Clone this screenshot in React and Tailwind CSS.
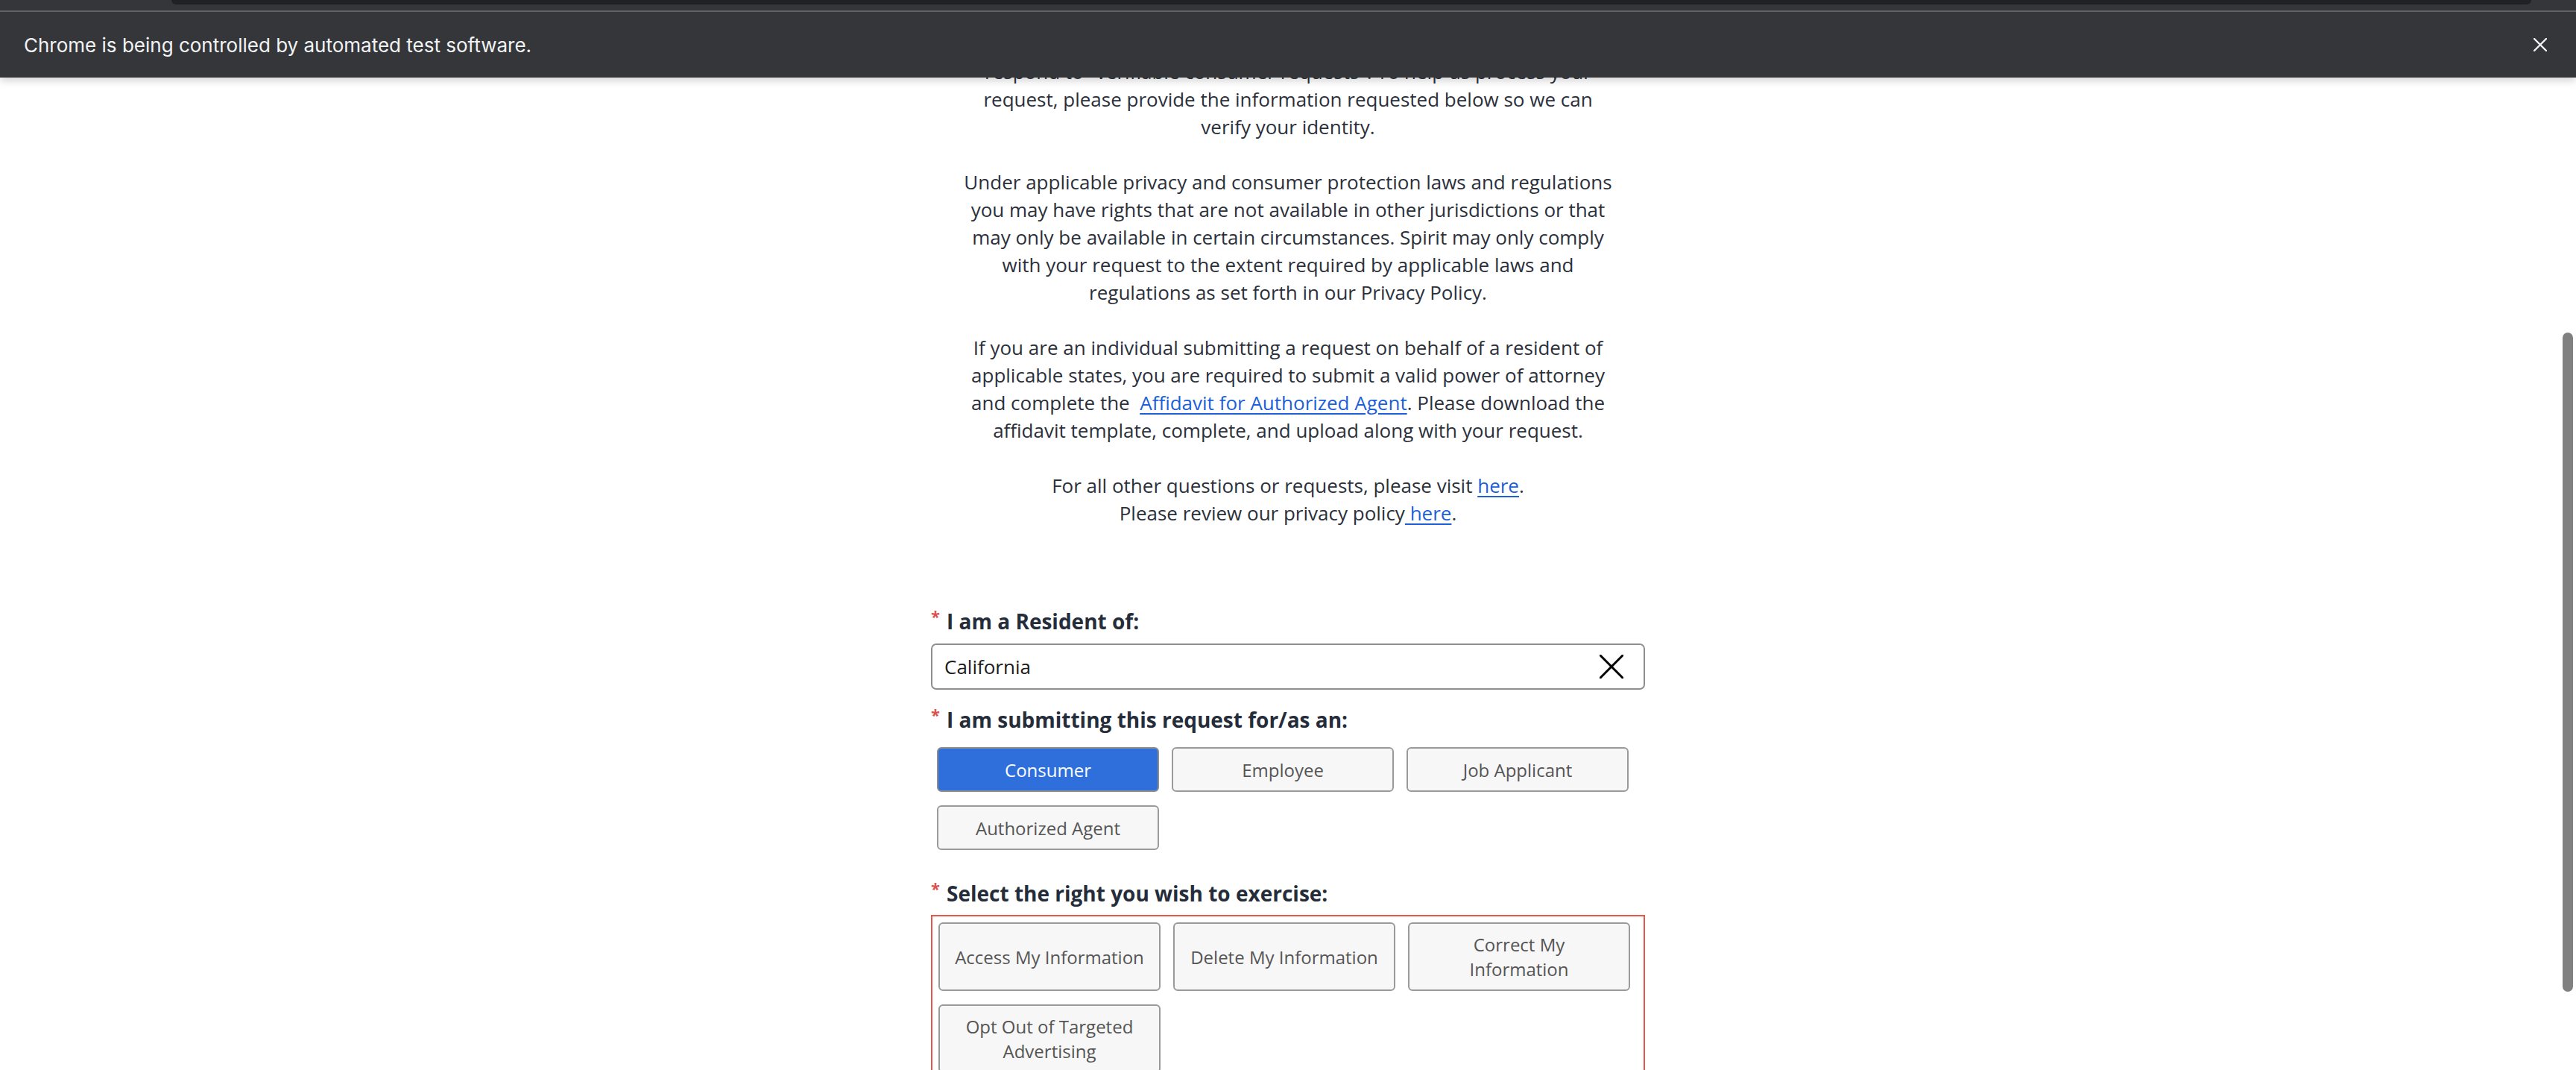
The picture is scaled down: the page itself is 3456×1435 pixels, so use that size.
const Asterisk = () => (
  <span className="relative -top-[9px] mr-[9px] text-[22px] leading-none text-[#d9534f]">*</span>
);

const Label = ({ children, className = "" }) => (
  <div className={`flex items-baseline text-[28px] leading-[37px] font-bold text-[#262d3a] ${className}`}>
    <Asterisk />
    <span>{children}</span>
  </div>
);

const Choice = ({ children, active }) => (
  <button
    className={
      active
        ? "w-[298px] min-h-[60px] px-[16px] py-[11px] border-2 border-[#8d8d8d] rounded-[6px] bg-[#2f6fdb] text-white text-[24px] leading-[33px]"
        : "w-[298px] min-h-[60px] px-[16px] py-[11px] border-2 border-[#9a9a9a] rounded-[6px] bg-[#f7f7f7] text-[#555] text-[24px] leading-[33px]"
    }
  >
    {children}
  </button>
);

const A = ({ children }) => (
  <a href="#" className="text-[#1d5fd6] underline underline-offset-[4px]">
    {children}
  </a>
);

const Cross = ({ size, stroke, className }) => (
  <svg width={size} height={size} viewBox={`0 0 ${size} ${size}`} className={className}>
    <path
      d={`M1 1 L${size - 1} ${size - 1} M${size - 1} 1 L1 ${size - 1}`}
      stroke="currentColor"
      strokeWidth={stroke}
      strokeLinecap="round"
      fill="none"
    />
  </svg>
);

export default function App() {
  return (
    <div className="relative w-full h-[1435px] overflow-hidden bg-white flex flex-col font-['Open_Sans',sans-serif]">
      {/* browser chrome */}
      <div className="relative z-10 shadow-[0_4px_10px_rgba(0,0,0,0.18)]">
        <div className="h-[14px] bg-[#35363a] pl-[230px] pr-[60px]">
          <div className="h-[6px] bg-[#202124] rounded-b-[12px]" />
        </div>
        <div className="h-[2px] bg-[#5f6166]" />
        <div className="h-[88px] bg-[#35363a] flex items-center justify-between pl-[32px] pr-[39px]">
          <span className="font-['Inter',sans-serif] text-[26px] text-[#f1f3f4]">
            Chrome is being controlled by automated test software.
          </span>
          <Cross size={18} stroke={2.4} className="text-[#f1f3f4]" />
        </div>
      </div>

      {/* page */}
      <div className="flex-1 overflow-hidden">
        <div className="-mt-[26px] w-[958px] mx-auto text-center text-[26px] leading-[37px] text-[#2b303b] whitespace-nowrap">
          <p>
            respond to "verifiable consumer requests". To help us process your
            <br />
            request, please provide the information requested below so we can
            <br />
            verify your identity.
          </p>
          <p className="mt-[37px]">
            Under applicable privacy and consumer protection laws and regulations
            <br />
            you may have rights that are not available in other jurisdictions or that
            <br />
            may only be available in certain circumstances. Spirit may only comply
            <br />
            with your request to the extent required by applicable laws and
            <br />
            regulations as set forth in our Privacy Policy.
          </p>
          <p className="mt-[37px]">
            If you are an individual submitting a request on behalf of a resident of
            <br />
            applicable states, you are required to submit a valid power of attorney
            <br />
            and complete the&nbsp; <A>Affidavit for Authorized Agent</A>. Please download the
            <br />
            affidavit template, complete, and upload along with your request.
          </p>
          <p className="mt-[37px]">
            For all other questions or requests, please visit <A>here</A>.
            <br />
            Please review our privacy policy<A> here</A>.
          </p>
        </div>

        {/* form */}
        <div className="w-[958px] mx-auto mt-[108px]">
          <Label>I am a Resident of:</Label>
          <div className="mt-[11px] h-[62px] border-2 border-[#8f8f8f] rounded-[7px] flex items-center justify-between pl-[16px] pr-[27px]">
            <span className="text-[26px] text-[#1c1c1c]">California</span>
            <Cross size={32} stroke={3} className="text-black" />
          </div>

          <Label className="mt-[22px]">I am submitting this request for/as an:</Label>
          <div className="mt-[10px] p-[8px] flex flex-wrap gap-x-[17px] gap-y-[18px]">
            <Choice active>Consumer</Choice>
            <Choice>Employee</Choice>
            <Choice>Job Applicant</Choice>
            <Choice>Authorized Agent</Choice>
          </div>

          <Label className="mt-[32px]">Select the right you wish to exercise:</Label>
          <div className="mt-[10px] p-[8px] border-2 border-[#e5574b] flex flex-wrap gap-x-[17px] gap-y-[18px]">
            <Choice>Access My Information</Choice>
            <Choice>Delete My Information</Choice>
            <Choice>
              Correct My
              <br />
              Information
            </Choice>
            <Choice>
              Opt Out of Targeted
              <br />
              Advertising
            </Choice>
          </div>
        </div>
      </div>

      {/* overlay scrollbar */}
      <div className="absolute right-[4px] top-[446px] w-[14px] h-[884px] rounded-full bg-[#808080]" />
    </div>
  );
}
